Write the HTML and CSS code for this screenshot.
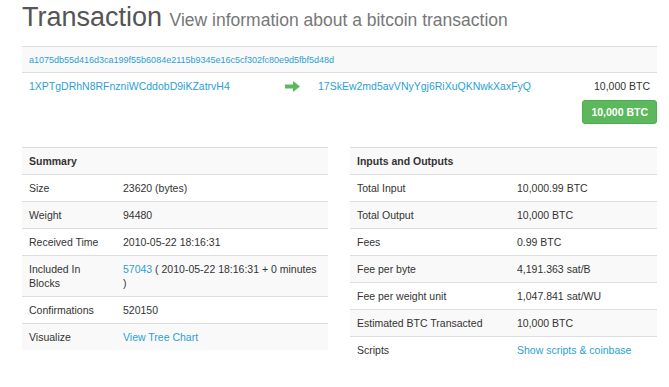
FILE: index.html
```html
<!DOCTYPE html>
<html>
<head>
<meta charset="utf-8">
<title>Transaction</title>
<link rel="stylesheet" href="styles.css">
</head>
<body>
<div class="page">
  <h1 class="title">Transaction <small>View information about a bitcoin transaction</small></h1>

  <div class="hash-bar"><a href="#">a1075db55d416d3ca199f55b6084e2115b9345e16c5cf302fc80e9d5fbf5d48d</a></div>

  <div class="io-row">
    <div class="inputs"><a href="#">1XPTgDRhN8RFnzniWCddobD9iKZatrvH4</a></div>
    <div class="arrow">
      <svg width="15" height="11" viewBox="0 0 15 11"><path d="M0 3.5H8V0L15 5.5L8 11V7.5H0Z" fill="#5cb85c"/></svg>
    </div>
    <div class="outputs"><a href="#">17SkEw2md5avVNyYgj6RiXuQKNwkXaxFyQ</a></div>
    <div class="amount">10,000 BTC</div>
  </div>
  <div class="total-row"><span class="btn-green">10,000 BTC</span></div>

  <div class="tables">
    <table class="info info-left">
      <colgroup><col class="c-label-l"><col></colgroup>
      <tr><th colspan="2">Summary</th></tr>
      <tr><td>Size</td><td>23620 (bytes)</td></tr>
      <tr><td>Weight</td><td>94480</td></tr>
      <tr><td>Received Time</td><td>2010-05-22 18:16:31</td></tr>
      <tr><td>Included In Blocks</td><td><a href="#">57043</a> ( 2010-05-22 18:16:31 + 0 minutes )</td></tr>
      <tr><td>Confirmations</td><td>520150</td></tr>
      <tr><td>Visualize</td><td><a href="#">View Tree Chart</a></td></tr>
    </table>
    <table class="info info-right">
      <colgroup><col class="c-label-r"><col></colgroup>
      <tr><th colspan="2">Inputs and Outputs</th></tr>
      <tr><td>Total Input</td><td>10,000.99 BTC</td></tr>
      <tr><td>Total Output</td><td>10,000 BTC</td></tr>
      <tr><td>Fees</td><td>0.99 BTC</td></tr>
      <tr><td>Fee per byte</td><td>4,191.363 sat/B</td></tr>
      <tr><td>Fee per weight unit</td><td>1,047.841 sat/WU</td></tr>
      <tr><td>Estimated BTC Transacted</td><td>10,000 BTC</td></tr>
      <tr><td>Scripts</td><td><a href="#">Show scripts &amp; coinbase</a></td></tr>
    </table>
  </div>
</div>
</body>
</html>
```

FILE: styles.css
```css
html, body {
  margin: 0;
  padding: 0;
  background: #fff;
}
body {
  font-family: "Liberation Sans", Arial, sans-serif;
  font-size: 10.5px;
  color: #333;
}
a {
  color: #2a9fd6;
  text-decoration: none;
}
.page {
  width: 635px;
  padding-left: 22px;
}
.title {
  margin: 2px 0 0;
  font-size: 27px;
  font-weight: normal;
  line-height: 30px;
  color: #555;
}
.title small {
  font-size: 17.5px;
  color: #777;
}
.hash-bar {
  margin-top: 11px;
  background: #f9f9f9;
  border-top: 1px solid #ddd;
  border-bottom: 1px solid #ddd;
  padding: 6px 7px 5px;
  line-height: 14px;
  font-size: 9px;
}
.io-row {
  display: grid;
  grid-template-columns: 248px 41px 1fr auto;
  line-height: 15px;
}
.io-row > div {
  padding: 6px 7px;
}
.arrow {
  display: flex;
  align-items: center;
  padding-left: 15px !important;
}
.arrow svg {
  display: block;
}
.amount {
  text-align: right;
}
.total-row {
  display: flex;
  justify-content: flex-end;
}
.btn-green {
  display: inline-block;
  background: #5cb85c;
  border: 1px solid #4cae4c;
  border-radius: 3px;
  color: #fff;
  font-weight: bold;
  padding: 3px 8px;
  line-height: 16px;
}
.tables {
  margin-top: 23px;
  display: grid;
  grid-template-columns: 306px 307px;
  column-gap: 22px;
  align-items: start;
}
.info {
  width: 100%;
  border-collapse: collapse;
  table-layout: fixed;
}
.info th,
.info td {
  border-top: 1px solid #ddd;
  padding: 6px 7px;
  line-height: 14px;
  text-align: left;
  vertical-align: top;
}
.info th {
  font-weight: bold;
}
.info tr:nth-child(odd) {
  background: #f9f9f9;
}
.c-label-l {
  width: 94px;
}
.c-label-r {
  width: 160px;
}
```
